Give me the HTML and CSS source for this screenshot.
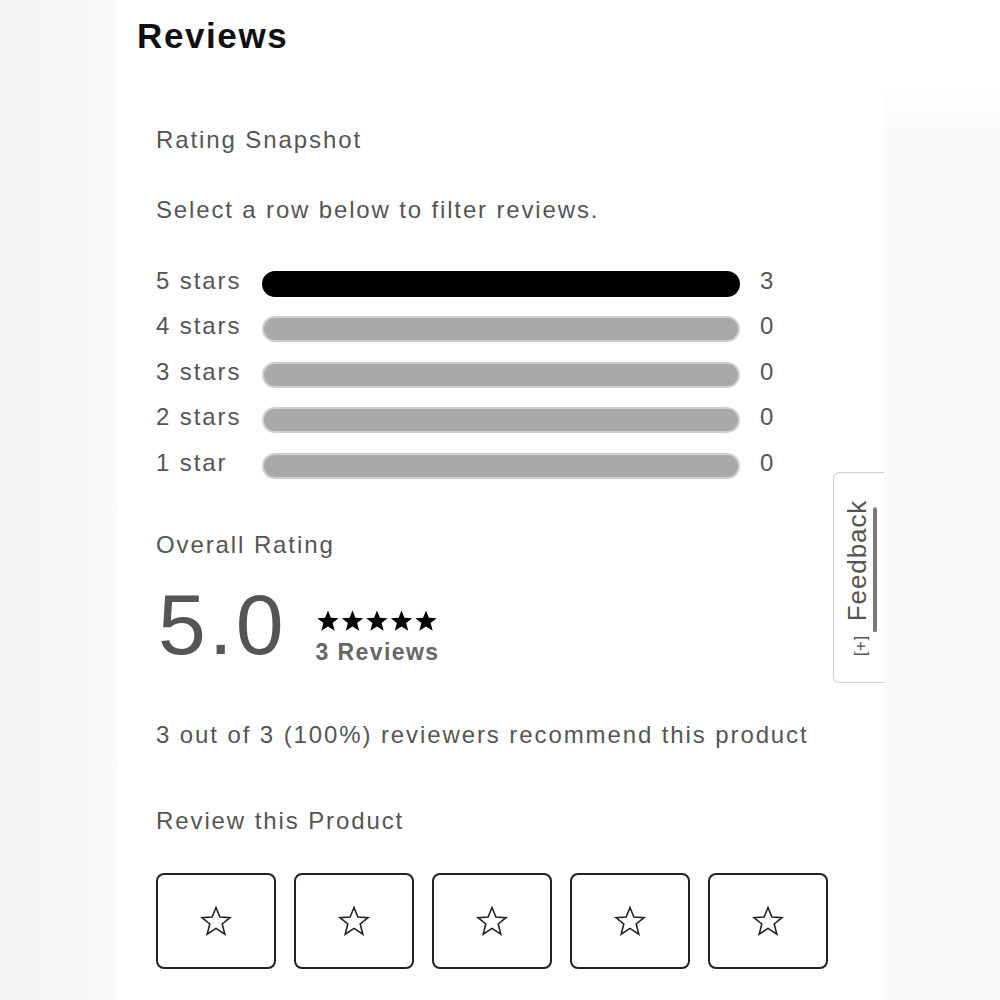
FILE: index.html
```html
<!DOCTYPE html>
<html>
<head>
<meta charset="utf-8">
<link rel="stylesheet" href="styles.css">
</head>
<body>
<div class="page">
  <main class="column">
    <h1 class="title">Reviews</h1>
    <section class="content">
      <h2 class="label">Rating Snapshot</h2>
      <p class="hint">Select a row below to filter reviews.</p>
      <div class="hist">
        <div class="hrow"><span class="hname">5 stars</span><span class="bar full"></span><span class="hcount">3</span></div>
        <div class="hrow"><span class="hname">4 stars</span><span class="bar"></span><span class="hcount">0</span></div>
        <div class="hrow"><span class="hname">3 stars</span><span class="bar"></span><span class="hcount">0</span></div>
        <div class="hrow"><span class="hname">2 stars</span><span class="bar"></span><span class="hcount">0</span></div>
        <div class="hrow"><span class="hname">1 star</span><span class="bar"></span><span class="hcount">0</span></div>
      </div>
      <h2 class="label overall">Overall Rating</h2>
      <div class="score">
        <span class="big">5.0</span>
        <div class="score-side">
          <svg class="stars" width="122" height="24" viewBox="0 0 122 24">
            <defs><path id="s" d="M12 1.5l2.9 7.3 7.8.4-6.1 4.9 2.1 7.6L12 17.4l-6.7 4.3 2.1-7.6-6.1-4.9 7.8-.4z"/></defs>
            <use href="#s" x="0"/><use href="#s" x="24.5"/><use href="#s" x="49"/><use href="#s" x="73.5"/><use href="#s" x="98"/>
          </svg>
          <span class="count">3 Reviews</span>
        </div>
      </div>
      <p class="recommend">3 out of 3 (100%) reviewers recommend this product</p>
      <h2 class="label review">Review this Product</h2>
      <div class="boxes">
        <button class="box"><svg width="34" height="32" viewBox="0 0 34 32"><path class="ostar" d="M17 2.5l3.9 9.5 10.1.6-7.8 6.4 2.6 10.1L17 23.4l-8.8 5.7 2.6-10.1-7.8-6.4 10.1-.6z"/></svg></button>
        <button class="box"><svg width="34" height="32" viewBox="0 0 34 32"><path class="ostar" d="M17 2.5l3.9 9.5 10.1.6-7.8 6.4 2.6 10.1L17 23.4l-8.8 5.7 2.6-10.1-7.8-6.4 10.1-.6z"/></svg></button>
        <button class="box"><svg width="34" height="32" viewBox="0 0 34 32"><path class="ostar" d="M17 2.5l3.9 9.5 10.1.6-7.8 6.4 2.6 10.1L17 23.4l-8.8 5.7 2.6-10.1-7.8-6.4 10.1-.6z"/></svg></button>
        <button class="box"><svg width="34" height="32" viewBox="0 0 34 32"><path class="ostar" d="M17 2.5l3.9 9.5 10.1.6-7.8 6.4 2.6 10.1L17 23.4l-8.8 5.7 2.6-10.1-7.8-6.4 10.1-.6z"/></svg></button>
        <button class="box"><svg width="34" height="32" viewBox="0 0 34 32"><path class="ostar" d="M17 2.5l3.9 9.5 10.1.6-7.8 6.4 2.6 10.1L17 23.4l-8.8 5.7 2.6-10.1-7.8-6.4 10.1-.6z"/></svg></button>
      </div>
    </section>
    <div class="feedback"><span class="fb-text"><span class="fb-plus">[+]</span> <span class="fb-word">Feedback</span></span></div>
  </main>
</div>
</body>
</html>
```

FILE: styles.css
```css
* { box-sizing: border-box; }
html, body { margin: 0; padding: 0; }
body {
  background:
    linear-gradient(180deg, #fff 0, #fff 85px, rgba(255,255,255,0) 130px) right top / 116px 100% no-repeat,
    linear-gradient(90deg, #f3f3f3 0, #f9f9f9 117px, #fafafa 100%);
  font-family: "Liberation Sans", Arial, sans-serif;
  width: 1000px;
  height: 1000px;
  overflow: hidden;
}
.page {
  display: flex;
  height: 1000px;
}
.column {
  position: relative;
  margin-left: 117px;
  width: 767px;
  height: 1000px;
  background: #fff;
}
.title {
  margin: 16px 0 0 20px;
  font-size: 35px;
  line-height: 40px;
  font-weight: 700;
  letter-spacing: 1.6px;
  color: #111;
}
.content {
  padding-left: 39px;
  color: #555;
}
.label {
  margin: 69px 0 0;
  font-size: 24px;
  line-height: 30px;
  font-weight: 400;
  letter-spacing: 1.9px;
  color: #555;
}
.hint {
  margin: 40px 0 0;
  font-size: 24px;
  line-height: 30px;
  letter-spacing: 1.85px;
}
.hist {
  margin-top: 33px;
  display: flex;
  flex-direction: column;
}
.hrow {
  display: flex;
  align-items: center;
  height: 45.5px;
}
.hname {
  width: 106px;
  font-size: 24px;
  letter-spacing: 1.9px;
}
.bar {
  width: 478px;
  height: 26px;
  margin-top: 6px;
  border-radius: 13px;
  background: #a9a9a9;
  border: 2px solid #cfcfcf;
}
.bar.full {
  background: #000;
  border-color: #000;
}
.hcount {
  margin-left: 20px;
  font-size: 24px;
}
.label.overall { margin-top: 44.5px; }
.score {
  margin-top: 19px;
  display: flex;
  align-items: center;
  height: 90px;
}
.big {
  font-size: 86px;
  line-height: 90px;
  color: #555;
  margin-left: 2px;
  letter-spacing: 3px;
}
.score-side {
  margin-left: 29px;
  display: flex;
  flex-direction: column;
  padding-top: 26px;
}
.stars { fill: #000; display: block; }
.count {
  margin-top: 6px;
  font-size: 23px;
  font-weight: 700;
  color: #666;
  letter-spacing: 1.4px;
}
.recommend {
  margin: 51px 0 0;
  font-size: 24px;
  line-height: 30px;
  letter-spacing: 1.9px;
}
.label.review { margin-top: 56px; }
.boxes {
  margin-top: 37px;
  display: flex;
  gap: 18px;
}
.box {
  width: 120px;
  height: 96px;
  border: 2px solid #222;
  border-radius: 8px;
  background: #fff;
  display: flex;
  align-items: center;
  justify-content: center;
  padding: 0;
}
.ostar {
  fill: none;
  stroke: #222;
  stroke-width: 1.6;
  stroke-linejoin: miter;
}
.feedback {
  position: absolute;
  left: 716px;
  top: 472px;
  width: 51px;
  height: 211px;
  background: #fff;
  border: 1.5px solid #d0d0d0;
  border-right: none;
  border-radius: 6px 0 0 6px;
}
.fb-text {
  position: absolute;
  left: 50%;
  top: 50%;
  transform: translate(-50%, -50%) rotate(-90deg);
  white-space: nowrap;
  font-size: 26px;
  line-height: 28px;
  color: #555;
  letter-spacing: 0.9px;
}
.fb-plus { font-size: 17px; letter-spacing: 0.5px; margin-right: 6px; }
.fb-word { position: relative; }
.fb-word::after {
  content: "";
  position: absolute;
  left: -11px;
  right: 7px;
  bottom: -5px;
  height: 4px;
  border-radius: 2px;
  background: #7a7a7a;
}
```
